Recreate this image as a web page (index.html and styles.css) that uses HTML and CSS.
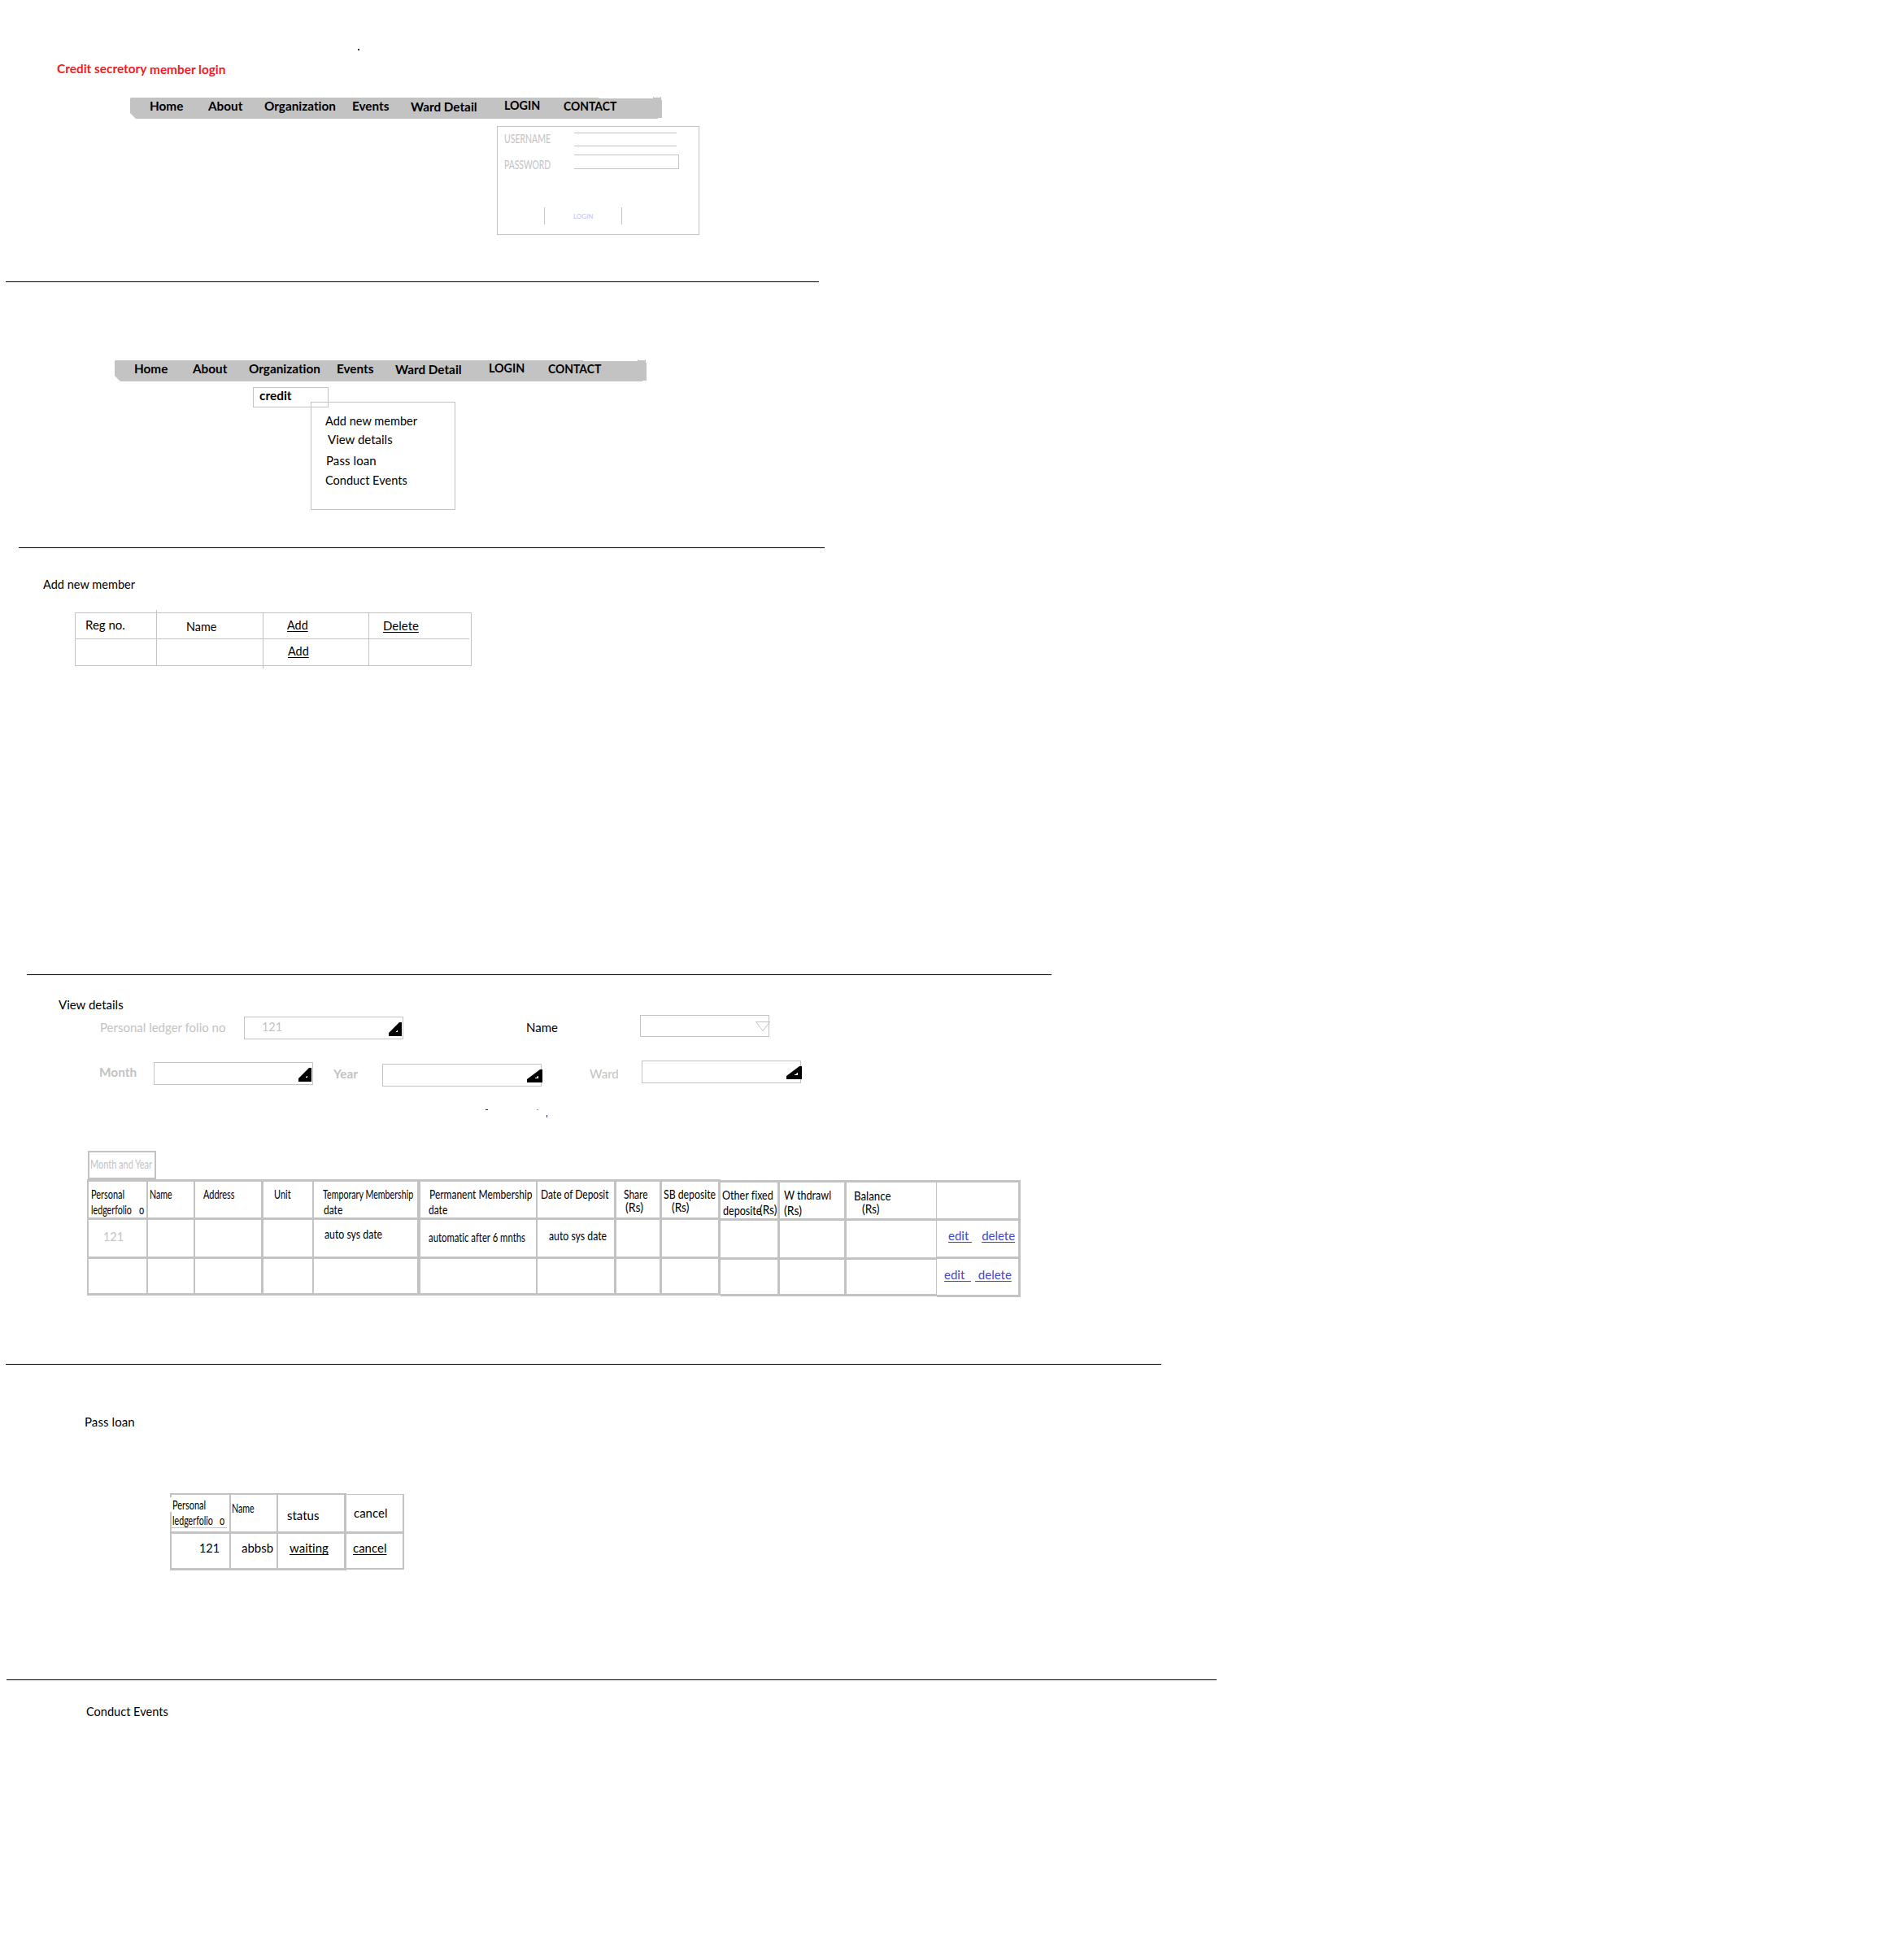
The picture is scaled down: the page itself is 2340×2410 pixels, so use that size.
FILE: index.html
```html
<!DOCTYPE html>
<html lang="en">
<head>
<meta charset="utf-8">
<title>Credit secretory member login</title>
<link rel="stylesheet" href="styles.css">
</head>
<body>

<section class="screen screen-login">
  <i class="speck speck-top"></i>
  <h1 class="title"><span>Credit secretory</span><span class="down-1">member login</span></h1>
  <nav class="nav">
    <a>Home</a><a>About</a><a>Organization</a><a>Events</a><a class="down-1">Ward Detail</a><a class="up-1"><span class="x93">LOGIN</span></a><a><span class="x91">CONTACT</span></a>
  </nav>
  <form class="login">
    <div class="login-row row-user"><label><span class="x70">USERNAME</span></label><div class="field field-user"></div></div>
    <div class="login-row row-pass"><label><span class="x69">PASSWORD</span></label><div class="field field-pass"></div></div>
    <div class="login-button">LOGIN</div>
  </form>
</section>
<hr class="rule rule-1">

<section class="screen screen-menu">
  <nav class="nav">
    <a>Home</a><a>About</a><a>Organization</a><a>Events</a><a class="down-1">Ward Detail</a><a class="up-1"><span class="x93">LOGIN</span></a><a><span class="x91">CONTACT</span></a>
  </nav>
  <div class="dropdown">
    <div class="dropdown-head">credit</div>
    <ul class="submenu">
      <li><span class="x98">Add new member</span></li>
      <li class="item-view">View details</li>
      <li class="item-loan">Pass loan</li>
      <li class="item-events"><span class="x98">Conduct Events</span></li>
    </ul>
  </div>
</section>
<hr class="rule rule-2">

<section class="screen screen-add">
  <h2><span class="x98">Add new member</span></h2>
  <div class="members">
    <div class="m-reg">Reg no.</div><div class="m-name"><span class="x96">Name</span></div><div class="m-add"><u class="x96">Add</u></div><div class="m-del"><u>Delete</u></div>
    <div></div><div></div><div class="m-add2"><u class="x96">Add</u></div><div></div>
  </div>
</section>
<hr class="rule rule-3">

<section class="screen screen-view">
  <h2>View details</h2>
  <div class="filters filters-top">
    <label class="muted f-folio">Personal ledger folio no</label>
    <div class="select s-folio"><span class="muted x96">121</span>
      <svg width="16" height="17"><path fill-rule="evenodd" d="M0 13L13 0H16V17H0ZM9 12h2v-2h-1v1h-1z"/></svg></div>
    <label class="f-name">Name</label>
    <div class="select s-name">
      <svg width="18" height="12"><path d="M0 .5H18M1 1L9 11.5L17 1" fill="none" stroke="#c3c3c3"/></svg></div>
  </div>
  <div class="filters filters-bottom">
    <label class="muted strong f-month">Month</label>
    <div class="select s-month"><svg width="16" height="17"><path fill-rule="evenodd" d="M0 13L13 0H16V17H0ZM9 12h2v-2h-1v1h-1z"/></svg></div>
    <label class="muted strong f-year">Year</label>
    <div class="select s-year"><svg width="19" height="16"><path fill-rule="evenodd" d="M0 12L16 0H19V16H0ZM10 11h4V8h-1l-1 2h-2z"/></svg></div>
    <label class="muted f-ward">Ward</label>
    <div class="select s-ward"><svg width="19" height="16"><path fill-rule="evenodd" d="M0 12L16 0H19V16H0ZM10 11h4V8h-1l-1 2h-2z"/></svg></div>
  </div>
  <div class="specks"><i class="speck speck-a"></i><i class="speck speck-b"></i><i class="speck speck-c"></i></div>

  <div class="period muted"><span class="x73">Month and Year</span></div>
  <div class="ledger">
    <div class="grid grid-main">
      <div class="h p3"><span class="x73">Personal</span><div class="folio"><span class="x72">ledgerfolio</span><span class="x73">o</span></div></div>
      <div class="h p2"><span class="x72">Name</span></div>
      <div class="h p10"><span class="x73">Address</span></div>
      <div class="h p13"><span class="x73">Unit</span></div>
      <div class="h p11"><span class="x72">Temporary Membership</span><span class="x80 line2 in-1">date</span></div>
      <div class="h p10"><span class="x80 in-1">Permanent Membership</span><span class="x80 line2">date</span></div>
      <div class="h p4"><span class="x80">Date of Deposit</span></div>
      <div class="h p9"><span class="x80">Share</span><span class="x93 rs in-2">(Rs)</span></div>
      <div class="h p2"><span class="x82">SB deposite</span><span class="x90 rs in-10">(Rs)</span></div>

      <div class="muted cell-id"><span class="x96">121</span></div>
      <div></div><div></div><div></div>
      <div class="auto-temp"><span class="x82">auto sys date</span></div>
      <div class="auto-perm"><span class="x75">automatic after 6 mnths</span></div>
      <div class="auto-dep"><span class="x82">auto sys date</span></div>
      <div></div><div></div>

      <div></div><div></div><div></div><div></div><div></div><div></div><div></div><div></div><div></div>
    </div>
    <div class="grid grid-money">
      <div class="h p2"><span class="x84">Other fixed</span><div class="fixed"><span class="x84">deposite</span><span class="x90 up-1">(Rs)</span></div></div>
      <div class="h p5"><span class="x84">W thdrawl</span><span class="x93 line2">(Rs)</span></div>
      <div class="h p9 balance"><span class="x88">Balance</span><span class="x90 rs in-10">(Rs)</span></div>
      <div></div><div></div><div></div>
      <div></div><div></div><div></div>
    </div>
    <div class="grid grid-actions">
      <div></div>
      <div class="actions act-1"><u>edit </u><u>delete</u></div>
      <div class="actions act-2"><u>edit  </u><u> delete</u></div>
    </div>
  </div>
</section>
<hr class="rule rule-4">

<section class="screen screen-loan">
  <h2>Pass loan</h2>
  <div class="loans">
    <div class="grid grid-loan">
      <div class="l-folio"><span class="x73">Personal</span><div class="folio"><span class="x72">ledgerfolio</span><span class="x73">o</span></div></div>
      <div class="l-name"><span class="x72">Name</span></div>
      <div class="l-status">status</div>
      <div class="l-id"><span class="x96">121</span></div>
      <div class="l-who">abbsb</div>
      <div class="l-wait"><u>waiting</u></div>
    </div>
    <div class="grid grid-cancel">
      <div class="l-cancel">cancel</div>
      <div class="l-cancel2"><u>cancel</u></div>
    </div>
  </div>
</section>
<hr class="rule rule-5">

<section class="screen-events">
  <h2><span class="x98">Conduct Events</span></h2>
</section>

</body>
</html>
```
FILE: styles.css
```css
* { box-sizing: border-box; }

body {
  margin: 0;
  width: 2340px;
  height: 2410px;
  background: #fff;
  color: #000;
  font: 15px/22px Lato, Carlito, "Open Sans", sans-serif;
  font-variant-ligatures: none;
  white-space: nowrap;
}

h1, h2 { margin: 0; font-size: 15px; line-height: 22px; font-weight: 400; }
ul { margin: 0; padding: 0; list-style: none; }
svg { display: block; flex: none; }
u { text-decoration: underline 1px; text-underline-offset: 2px; text-decoration-skip-ink: none; white-space: pre; }

.muted { color: #c3c3c3; }
.strong { font-weight: 700; font-size: 15.4px; }
.down-1 { margin-top: 1px; }
.up-1 { margin-top: -1px; }

/* horizontally condensed labels */
.x69, .x70, .x72, .x73, .x75, .x80, .x82, .x84, .x88, .x90, .x91, .x93, .x96, .x98 {
  display: block;
  width: max-content;
  transform-origin: 0 0;
}
.x69 { transform: scaleX(.69); }
.x70 { transform: scaleX(.7); }
.x72 { transform: scaleX(.712); }
.x73 { transform: scaleX(.73); }
.x75 { transform: scaleX(.755); }
.x80 { transform: scaleX(.8); }
.x82 { transform: scaleX(.818); }
.x84 { transform: scaleX(.838); }
.x88 { transform: scaleX(.885); }
.x90 { transform: scaleX(.91); }
.x91 { transform: scaleX(.91); }
.x93 { transform: scaleX(.935); }
.x96 { transform: scaleX(.96); }
.x98 { transform: scaleX(.97); }

/* screens and the rules between them */
.screen { overflow: hidden; }
.screen-login { height: 346px; }
.screen-menu { height: 326px; }
.screen-add { height: 524px; }
.screen-view { height: 478px; }
.screen-loan { height: 387px; }

.rule { height: 1px; margin: 0; border: 0; background: #000; }
.rule-1 { margin-left: 7px; width: 1000px; }
.rule-2 { margin-left: 23px; width: 991px; }
.rule-3 { margin-left: 33px; width: 1260px; }
.rule-4 { margin-left: 7px; width: 1421px; }
.rule-5 { margin-left: 8px; width: 1488px; }

.speck { display: block; width: 2px; height: 2px; background: #333; }
.speck-top { margin: 60px 0 0 440px; }

.title {
  display: flex;
  align-items: flex-start;
  height: 21px;
  margin: 11px 0 0 70px;
  color: #ed1c24;
  font-weight: 700;
  font-size: 15.4px;
}
.title span:first-child { width: 114px; }

/* navigation */
.nav {
  display: grid;
  grid-template-columns: 72px 69px 108px 72px 115px 73px auto;
  width: 654px;
  height: 27px;
  padding-left: 24px;
  background: #c3c3c3;
  clip-path: polygon(0 2px, 1px 1px, 576px 1px, 576px 2px, 643px 2px, 643px 0, 644px 0, 644px 1px, 652px 1px, 652px 0, 653px 0, 653px 4px, 654px 4px, 654px 26px, 649px 26px, 649px 27px, 7px 27px, 0 20px);
  font-weight: 700;
  font-size: 15.3px;
}
.screen-login .nav { margin: 25px 0 0 160px; }
.screen-menu .nav { margin: 95px 0 0 141px; }

/* login form */
.login {
  width: 249px;
  height: 134px;
  margin: 9px 0 0 611px;
  border: 1px solid #c3c3c3;
  color: #c3c3c3;
}
.login-row { display: grid; grid-template-columns: 86px auto; padding-left: 8px; align-items: start; }
.row-user { padding-top: 4px; height: 34px; }
.row-user label { margin-top: -1px; }
.row-user .field { margin-top: 3px; }
.row-pass { height: 65px; padding-top: 0; }
.row-pass label { margin-top: 1px; }
.field { border: solid #c3c3c3; border-width: 1px 0; height: 17px; }
.field-user { width: 126px; }
.field-pass { width: 129px; height: 18px; border-right-width: 1px; }
.login-button {
  width: 96px;
  height: 21px;
  margin-left: 57px;
  padding-left: 35px;
  border: solid #c3c3c3;
  border-width: 0 1px;
  color: #c5c1ea;
  font-size: 8px;
}

/* dropdown with its submenu */
.dropdown { position: relative; width: 93px; height: 26px; margin: 7px 0 0 311px; }
.dropdown-head { height: 25px; padding: 0 0 0 7px; border: 1px solid #c3c3c3; font-weight: 700; font-size: 15.4px; line-height: 18px; }
.submenu { position: absolute; left: 71px; top: 18px; width: 178px; height: 133px; padding: 12px 0 0 17px; border: 1px solid #c3c3c3; line-height: 20px; }
.submenu .item-view { margin: 3px 0 0 3px; }
.submenu .item-loan { margin: 6px 0 0 1px; letter-spacing: .1px; }
.submenu .item-events { margin-top: 4px; }
.screen-menu { overflow: visible; display: flow-root; }

/* new member table */
.screen-add { padding: 33px 0 0 53px; }
.members {
  position: relative;
  display: grid;
  grid-template-columns: 100px 131px 130px 126px;
  grid-template-rows: 32px 33px;
  width: 488px;
  margin: 24px 0 0 39px;
  border: solid #c3c3c3;
  border-width: 1px 0 0 1px;
}
.members div { position: relative; border: solid #c3c3c3; border-width: 0 1px 1px 0; }
.members .m-reg { padding: 3px 0 0 12px; }
.members .m-name { padding: 5px 0 0 36px; }
.members .m-add { padding: 3px 0 0 29px; }
.members .m-del { padding: 4px 0 0 17px; }
.members .m-add2 { padding: 3px 0 0 30px; }
.m-reg::after { content: ""; position: absolute; right: -1px; top: -4px; width: 1px; height: 4px; background: #c3c3c3; }
.m-add2::after { content: ""; position: absolute; left: -1px; bottom: -4px; width: 1px; height: 4px; background: #c3c3c3; }
.m-del::after { content: ""; position: absolute; right: 0; bottom: -1px; width: 2px; height: 1px; background: #fff; }

/* view details */
.screen-view { padding: 25px 0 0 72px; }
.filters { display: flex; align-items: flex-start; }
.filters-top { margin: 2px 0 0 51px; height: 56px; }
.filters-bottom { margin: 0 0 0 50px; height: 60px; }
.select { display: flex; justify-content: flex-end; height: 28px; width: 196px; border: 1px solid #c3c3c3; }
.f-folio { width: 177px; margin-top: 4px; }
.s-folio { margin-top: 2px; padding: 6px 1px 0 0; }
.s-folio span { margin: -6px auto 0 21px; }
.f-name { width: 140px; margin: 4px 0 0 151px; }
.s-name { width: 159px; height: 27px; padding-top: 7px; }
.s-name svg { margin-right: -2px; }
.f-month { width: 67px; margin-top: 3px; }
.s-month { margin-top: 2px; padding: 6px 1px 0 0; }
.f-year { width: 60px; margin: 5px 0 0 25px; }
.s-year { margin-top: 4px; padding-top: 6px; }
.f-ward { width: 64px; margin: 5px 0 0 59px; }
.s-ward { padding-top: 6px; }
.s-year svg, .s-ward svg { margin-right: -2px; }
.specks { display: flex; height: 51px; padding-left: 525px; }
.speck-a { width: 3px; height: 1px; margin-right: 60px; }
.speck-b { width: 2px; height: 1px; margin-right: 10px; background: #b88; }
.speck-c { width: 1px; height: 3px; margin-top: 7px; background: #137; box-shadow: 0 -3px 0 -1px #137; }

.period { width: 84px; height: 35px; margin-left: 36px; padding: 3px 0 0 1px; border: 2px solid #c3c3c3; }

/* bordered grids */
.grid { display: grid; }
.grid > div { border: solid #c3c3c3; border-width: 0 3px 3px 0; }
.ledger { display: flex; align-items: flex-start; margin-left: 35px; }
.grid-main {
  grid-template-columns: 73px 58px 84px 62px 131px 144px 97px 56px 72px;
  grid-template-rows: 47px 48px 45px;
  border: solid #c3c3c3;
  border-width: 3px 0 0 2px;
}
.grid-main > div:nth-child(9n+1), .grid-main > div:nth-child(9n+2),
.grid-main > div:nth-child(9n+4), .grid-main > div:nth-child(9n+6) { border-right-width: 2px; }
.grid-main > div:nth-child(9n+5) { border-right-width: 4px; }
.grid-money {
  grid-template-columns: 73px 82px 111px;
  grid-template-rows: 47px 48px 45px;
  margin-top: 1px;
  border-top: 3px solid #c3c3c3;
}
.grid-money > div:nth-child(3n) { border-right-width: 1px; }
.grid-actions {
  grid-template-columns: 103px;
  grid-template-rows: 47px 47px 47px;
  margin-top: 1px;
  border-top: 3px solid #c3c3c3;
}

.grid > .h { padding-top: 4px; }
.grid > .balance { padding-top: 5px; }
.p2 { padding-left: 2px; }
.p3 { padding-left: 3px; }
.p4 { padding-left: 4px; }
.p5 { padding-left: 5px; }
.p9 { padding-left: 9px; }
.p10 { padding-left: 10px; }
.p11 { padding-left: 11px; }
.p13 { padding-left: 13px; }
.in-1 { margin-left: 1px; }
.in-2 { margin-left: 2px; }
.in-10 { margin-left: 10px; }
.line2 { margin-top: -3px; }
.rs { margin-top: -6px; }
.folio { display: grid; grid-template-columns: 59px 10px; margin-top: -3px; }
.fixed { display: grid; grid-template-columns: 45px 22px; margin: -3px 0 0 1px; }

.cell-id { padding: 9px 0 0 18px; }
.auto-temp { padding: 6px 0 0 13px; }
.auto-perm { padding: 10px 0 0 10px; }
.auto-dep { padding: 8px 0 0 14px; }
.actions { display: flex; color: #3f48cc; }
.act-1 { padding: 7px 0 0 14px; gap: 12px; }
.act-2 { padding: 8px 0 0 9px; gap: 5px; }

/* pass loan */
.screen-loan { padding: 59px 0 0 104px; }
.screen-loan h2 { letter-spacing: .1px; }
.loans { display: flex; align-items: flex-start; margin: 77px 0 0 105px; }
.grid-loan {
  grid-template-columns: 73px 58px 84px;
  grid-template-rows: 48px 45px;
  border: solid #c3c3c3;
  border-width: 2px 0 0 2px;
}
.grid-loan > div:nth-child(3n+1), .grid-loan > div:nth-child(3n+2) { border-right-width: 2px; }
.grid-cancel { grid-template-columns: 71px; grid-template-rows: 48px 44px; margin-top: 1px; border-top: 1px solid #c3c3c3; }
.grid-cancel > div { border-right-width: 2px; }
.grid-cancel > div:last-child { border-bottom-width: 2px; }
.l-folio { position: relative; padding-top: 1px; }
.l-folio::before { content: ""; position: absolute; left: -2px; top: 3px; width: 2px; height: 18px; background: #fff; }
.l-folio::after { content: ""; position: absolute; left: 0; top: 40px; width: 68px; height: 1px; background: #c3c3c3; }
.l-folio > span { margin-left: 1px; }
.l-folio .folio { margin-left: 1px; grid-template-columns: 58px 10px; }
.l-name { padding: 5px 0 0 1px; }
.l-status { padding: 14px 0 0 11px; }
.l-id { padding: 6px 0 0 34px; }
.l-who { padding: 6px 0 0 13px; }
.l-wait { padding: 6px 0 0 14px; }
.l-cancel { padding: 11px 0 0 9px; }
.l-cancel2 { padding: 6px 0 0 8px; }

.screen-events { padding: 27px 0 0 106px; }
```
